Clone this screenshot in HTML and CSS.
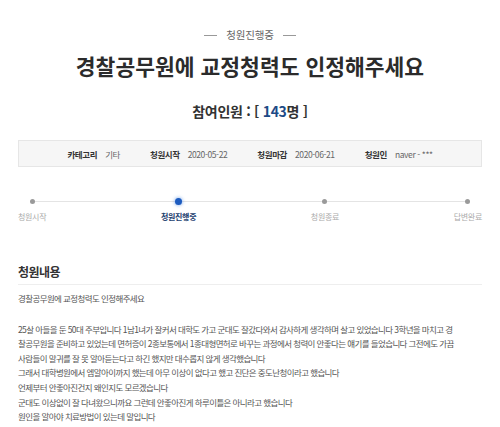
FILE: index.html
```html
<!DOCTYPE html>
<html lang="ko">
<head>
<meta charset="utf-8">
<title>경찰공무원에 교정청력도 인정해주세요</title>
<link rel="stylesheet" href="styles.css">
</head>
<body>
<div class="page">
  <div class="status"><span class="dash"></span><span class="status-text">청원진행중</span><span class="dash"></span></div>
  <h1 class="title">경찰공무원에 교정청력도 인정해주세요</h1>
  <p class="count">참여인원 : [ <span class="num">143</span>명 ]</p>

  <ul class="info">
    <li><span class="label">카테고리</span><span class="value">기타</span></li>
    <li><span class="label">청원시작</span><span class="value">2020-05-22</span></li>
    <li><span class="label">청원마감</span><span class="value">2020-06-21</span></li>
    <li><span class="label">청원인</span><span class="value">naver - ***</span></li>
  </ul>

  <ol class="steps">
    <li class="step"><span class="dot"></span><span class="step-label">청원시작</span></li>
    <li class="step active"><span class="dot"></span><span class="step-label">청원진행중</span></li>
    <li class="step"><span class="dot"></span><span class="step-label">청원종료</span></li>
    <li class="step"><span class="dot"></span><span class="step-label">답변완료</span></li>
  </ol>

  <h2 class="section-title">청원내용</h2>
  <div class="content">
    <p class="lead">경찰공무원에 교정청력도 인정해주세요</p>
    <p class="body">25살 아들을 둔 50대 주부입니다 1남1녀가 잘커서 대학도 가고 군대도 잘갔다와서 감사하게 생각하며 살고 있었습니다 3학년을 마치고 경<br>찰공무원을 준비하고 있었는데 면허증이 2종보통에서 1종대형면허로 바꾸는 과정에서 청력이 안좋다는 얘기를 들었습니다 그전에도 가끔<br>사람들이 말귀를 잘 못 알아듣는다고 하긴 했지만 대수롭지 않게 생각했습니다<br>그래서 대학병원에서 엠알아이까지 했는데 아무 이상이 없다고 했고 진단은 중도난청이라고 했습니다<br>언제부터 안좋아진건지 왜인지도 모르겠습니다<br>군대도 이상없이 잘 다녀왔으니까요 그런데 안좋아진게 하루이틀은 아니라고 했습니다<br>원인을 알아야 치료방법이 있는데 말입니다</p>
  </div>
</div>
</body>
</html>
```

FILE: styles.css
```css
html, body {
  margin: 0;
  padding: 0;
  background: #ffffff;
}
body {
  font-family: "Noto Sans CJK KR", "Noto Sans", sans-serif;
  color: #444;
  overflow: hidden;
}
.page {
  padding: 28px 18px 0 18px;
}
.status {
  display: flex;
  justify-content: center;
  align-items: center;
  gap: 9px;
  height: 14px;
}
.status-text {
  font-size: 10.5px;
  line-height: 14px;
  color: #666;
  letter-spacing: -0.2px;
}
.dash {
  width: 13px;
  height: 1px;
  background: #999;
}
.title {
  margin: 11px 0 0 0;
  text-align: center;
  font-size: 21.5px;
  line-height: 26px;
  font-weight: 700;
  color: #2b2b2b;
  letter-spacing: 0;
}
.count {
  margin: 22px 0 0 0;
  text-align: center;
  font-size: 14px;
  line-height: 20px;
  font-weight: 700;
  color: #333;
  letter-spacing: -0.3px;
}
.num {
  color: #1d4a86;
}
.info {
  list-style: none;
  margin: 19px 0 0 0;
  padding: 0;
  height: 25px;
  display: flex;
  justify-content: center;
  align-items: center;
  gap: 30px;
  background: #f6f6f6;
  border: 1px solid #e6e6e6;
  font-size: 8.5px;
  letter-spacing: -0.4px;
}
.info li {
  display: flex;
  align-items: center;
  gap: 8px;
}
.label {
  font-weight: 700;
  color: #333;
}
.value {
  color: #666;
}
.steps {
  list-style: none;
  margin: 30px 0 0 0;
  padding: 0;
  display: flex;
  justify-content: space-between;
  position: relative;
}
.steps::before {
  content: "";
  position: absolute;
  left: 15px;
  right: 15px;
  top: 4px;
  height: 1px;
  background: #e4e4e4;
}
.step {
  display: flex;
  flex-direction: column;
  align-items: center;
  gap: 6px;
  position: relative;
}
.dot {
  width: 5px;
  height: 5px;
  margin: 1.5px 0;
  border-radius: 50%;
  background: #9a9a9a;
}
.step.active .dot {
  width: 7px;
  height: 7px;
  margin: 0.5px 0;
  background: #1c5bbf;
  box-shadow: 0 0 3px 1px rgba(80, 140, 230, 0.45);
}
.step-label {
  font-size: 8px;
  line-height: 12px;
  color: #aaa;
  letter-spacing: -0.3px;
}
.step.active .step-label {
  color: #22406e;
  font-weight: 700;
}
.section-title {
  margin: 41px 0 0 0;
  padding-bottom: 4px;
  border-bottom: 1px solid #eeeeee;
  font-size: 12px;
  line-height: 16px;
  font-weight: 700;
  color: #333;
  letter-spacing: -0.5px;
}
.content {
  padding-top: 6px;
  font-size: 8.5px;
  line-height: 14.6px;
  letter-spacing: -0.6px;
  color: #555;
}
.lead {
  margin: 0;
}
.body {
  margin: 16px 0 0 0;
  white-space: nowrap;
}
```
